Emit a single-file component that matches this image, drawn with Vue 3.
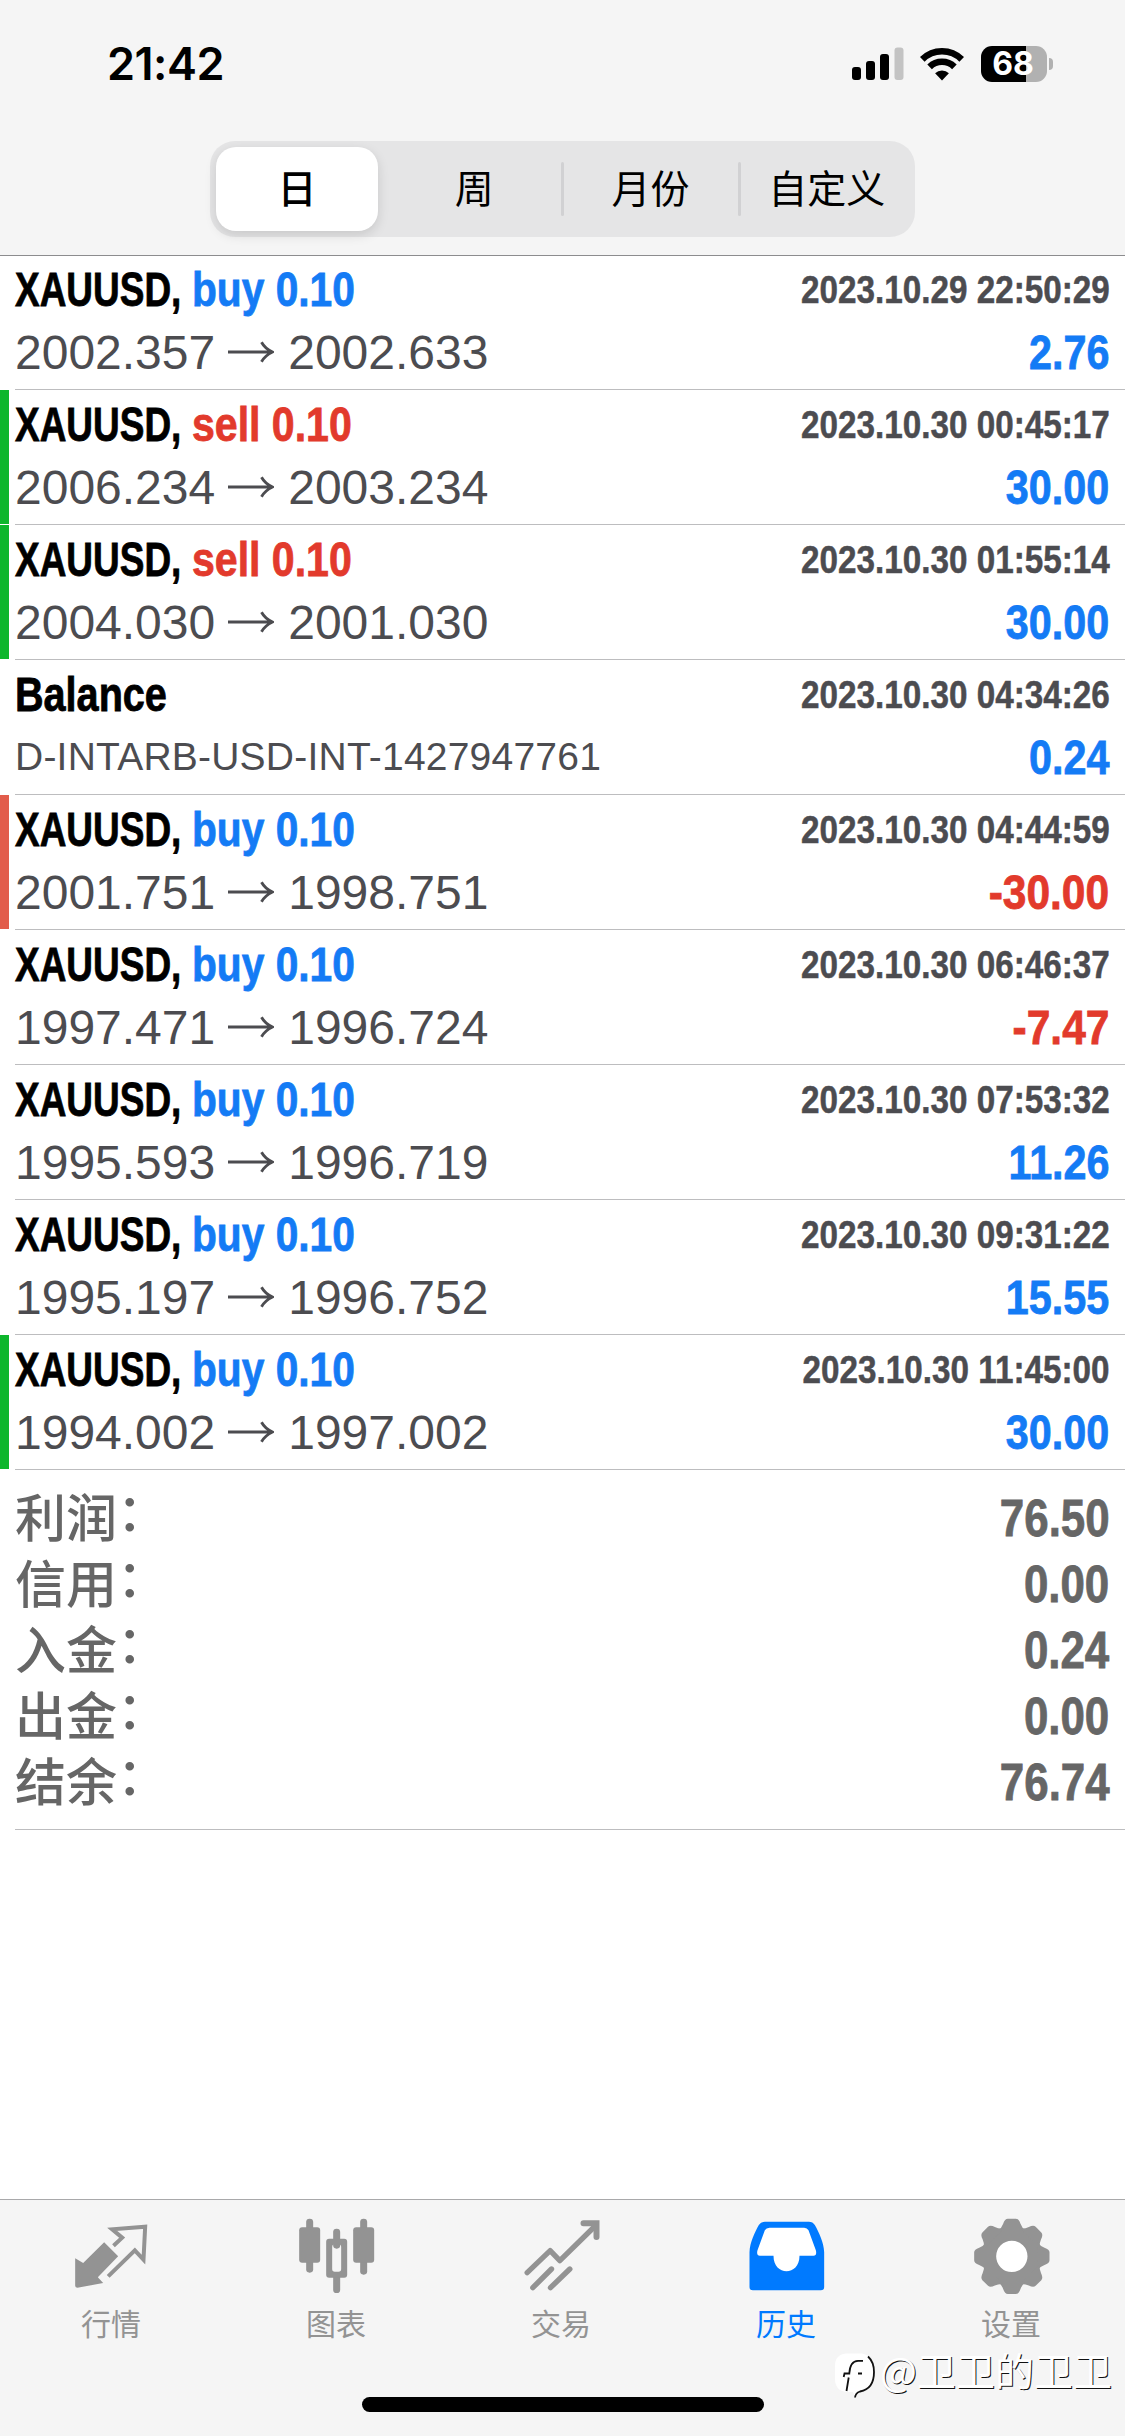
<script setup>
const periods = ['日', '周', '月份', '自定义']

const deals = [
  { symbol: 'XAUUSD,', side: 'buy', lots: '0.10', open: '2002.357', close: '2002.633', time: '2023.10.29 22:50:29', profit: '2.76' },
  { symbol: 'XAUUSD,', side: 'sell', lots: '0.10', open: '2006.234', close: '2003.234', time: '2023.10.30 00:45:17', profit: '30.00', mark: 'tp' },
  { symbol: 'XAUUSD,', side: 'sell', lots: '0.10', open: '2004.030', close: '2001.030', time: '2023.10.30 01:55:14', profit: '30.00', mark: 'tp' },
  { symbol: 'Balance', comment: 'D-INTARB-USD-INT-1427947761', time: '2023.10.30 04:34:26', profit: '0.24' },
  { symbol: 'XAUUSD,', side: 'buy', lots: '0.10', open: '2001.751', close: '1998.751', time: '2023.10.30 04:44:59', profit: '-30.00', mark: 'sl' },
  { symbol: 'XAUUSD,', side: 'buy', lots: '0.10', open: '1997.471', close: '1996.724', time: '2023.10.30 06:46:37', profit: '-7.47' },
  { symbol: 'XAUUSD,', side: 'buy', lots: '0.10', open: '1995.593', close: '1996.719', time: '2023.10.30 07:53:32', profit: '11.26' },
  { symbol: 'XAUUSD,', side: 'buy', lots: '0.10', open: '1995.197', close: '1996.752', time: '2023.10.30 09:31:22', profit: '15.55' },
  { symbol: 'XAUUSD,', side: 'buy', lots: '0.10', open: '1994.002', close: '1997.002', time: '2023.10.30 11:45:00', profit: '30.00', mark: 'tp' },
]

const totals = [
  ['利润', '76.50'],
  ['信用', '0.00'],
  ['入金', '0.24'],
  ['出金', '0.00'],
  ['结余', '76.74'],
]

const toothAngles = [0, 45, 90, 135, 180, 225, 270, 315]
</script>

<template>
  <div class="screen">
    <header class="header">
      <div class="status">
        <span class="clock">21:42</span>
        <div class="indicators">
          <svg class="signal" width="52" height="34" viewBox="0 0 52 34">
            <rect x="0" y="20" width="9" height="13" rx="3" />
            <rect x="14" y="14" width="9" height="19" rx="3" />
            <rect x="28" y="7" width="9" height="26" rx="3" />
            <rect x="42.5" y="0.5" width="9" height="32.5" rx="3" fill="#c3c3c3" />
          </svg>
          <svg class="wifi" width="44" height="34" viewBox="0 0 44 34">
            <g fill="none" stroke="#000" stroke-width="6.6">
              <path d="M2.3 12.3a28 28 0 0 1 39.4 0" />
              <path d="M9.6 19.8a17.8 17.8 0 0 1 24.8 0" />
            </g>
            <path d="M22 33.5l-6.9-7.2a9.8 9.8 0 0 1 13.8 0z" />
          </svg>
          <div class="battery">
            <div class="cell"><span>68</span></div>
            <i class="nub"></i>
          </div>
        </div>
      </div>
      <nav class="segmented">
        <button v-for="(p, i) in periods" :key="p" :class="{ active: i === 0, ruled: i > 1 }">{{ p }}</button>
      </nav>
    </header>

    <main class="list">
      <article v-for="d in deals" :key="d.time" class="deal" :class="d.mark">
        <div class="line top">
          <div class="title">
            <span class="name" :class="{ plain: !d.side }"><b>{{ d.symbol }}</b></span>
            <b v-if="d.side" class="side" :class="d.side">{{ d.side }} {{ d.lots }}</b>
          </div>
          <b class="time">{{ d.time }}</b>
        </div>
        <div class="line bottom">
          <div v-if="d.open" class="prices">
            <span>{{ d.open }}</span>
            <svg width="46" height="24" viewBox="0 0 46 24" fill="none" stroke="#4c4c50" stroke-width="2.8">
              <path d="M0 12H44M33.5 2.2Q37 8.5 44.5 12Q37 15.5 33.5 21.8" />
            </svg>
            <span>{{ d.close }}</span>
          </div>
          <span v-else class="comment">{{ d.comment }}</span>
          <b class="profit" :class="{ loss: d.profit[0] === '-' }">{{ d.profit }}</b>
        </div>
      </article>
      <section class="totals">
        <div v-for="t in totals" :key="t[0]" class="total">
          <span class="label">{{ t[0] }}<span class="colon">：</span></span>
          <b>{{ t[1] }}</b>
        </div>
      </section>
    </main>

    <footer class="tabs">
      <div class="tab">
        <svg viewBox="218.5 112 240 240">
          <path d="M225 236L249 250L312 188L354 230L293 293L309 310L232 324Q225 324 225 318Z" fill="currentColor" />
          <path d="M340 198L366 174L336 149L435 141L430 240L404 212L324 290" fill="none" stroke="currentColor" stroke-width="12" />
        </svg>
        <span>行情</span>
      </div>
      <div class="tab">
        <svg viewBox="893.5 112 240 240" fill="currentColor">
          <rect x="918" y="117" width="21" height="162" rx="10" />
          <rect x="897" y="143" width="63" height="106" rx="9" />
          <rect x="999" y="147" width="21" height="60" rx="10" />
          <rect x="999" y="280" width="21" height="60" rx="10" />
          <path fill-rule="evenodd" d="M987 177h45q9 0 9 9v99q0 9-9 9h-45q-9 0-9-9v-99q0-9 9-9zM1004 194q-8 0-8 8v66q0 8 8 8h11q8 0 8-8v-66q0-8-8-8z" />
          <rect x="1080" y="117" width="21" height="168" rx="10" />
          <rect x="1059" y="143" width="63" height="106" rx="9" />
        </svg>
        <span>图表</span>
      </div>
      <div class="tab">
        <svg viewBox="367.5 112 240 240" fill="none" stroke="currentColor" stroke-width="16" stroke-linecap="round">
          <path d="M380 279L449 213L478 243L587 136" stroke-linejoin="round" />
          <path d="M549 131H588V172" stroke-width="18" />
          <path d="M397 324L453 268M450 324L508 268" />
        </svg>
        <span>交易</span>
      </div>
      <div class="tab current">
        <svg viewBox="83.5 112 240 240">
          <path fill="#fff" d="M130 135h140l30 100-60 50h-80l-60-50z" />
          <path fill="currentColor" fill-rule="evenodd" d="M98 332Q88 332 88 322V218C89 188 104 158 116 136Q122 126 134 126H266Q278 126 284 136C296 158 311 188 312 218V322Q312 332 302 332ZM148 144Q138 144 134 152L112 212Q108 228 119 228H160C160 290 238 290 238 228H280Q291 228 287 212L265 152Q261 144 252 144Z" />
        </svg>
        <span>历史</span>
      </div>
      <div class="tab">
        <svg viewBox="-116.5 -118 240 240">
          <circle r="68" fill="#fff" stroke="currentColor" stroke-width="42" />
          <path v-for="a in toothAngles" :key="a" :transform="`rotate(${a})`" fill="currentColor" d="M-42-76Q-30-86-26-98Q-21-113-12-113H12Q21-113 26-98Q30-86 42-76Z" />
        </svg>
        <span>设置</span>
      </div>
      <i class="home"></i>
    </footer>

    <div class="watermark">
      <svg width="42" height="46" viewBox="0 0 42 46">
        <path d="M12 .5H27Q39 3 39 19Q39 36 24 38L20 44L18 39H12Q0 38 0 26V13Q0 1 12 .5Z" fill="#fff" />
        <path d="M33 3.5Q39 9 39 19Q39 36 25 38.5Q20.5 40 20 44.5" fill="none" stroke="#111" stroke-width="1.8" />
        <path d="M11.5 38L13.7 24.5M8.7 24L9.5 20.5H14.3Q15 8 23 7.8H28M23 20.5H27" fill="none" stroke="#111" stroke-width="1.8" />
      </svg>
      <span>@卫卫的卫卫</span>
    </div>
  </div>
</template>

<style>
body {
  background: #fff;
}
</style>

<style scoped>
.screen {
  position: relative;
  display: flex;
  flex-direction: column;
  width: 1125px;
  height: 2436px;
  overflow: hidden;
  background: #fff;
  font-family: 'Liberation Sans', 'Noto Sans CJK SC', sans-serif;
}
.header {
  position: relative;
  z-index: 1;
  flex: none;
  box-sizing: border-box;
  height: 256px;
  border-bottom: 1px solid #8c8c8e;
  background: #f5f5f5;
}
.status {
  display: flex;
  justify-content: space-between;
  align-items: center;
  box-sizing: border-box;
  height: 141px;
  padding: 0 72px 13px 107px;
}
.clock {
  font: 600 45px/60px Inter, sans-serif;
  letter-spacing: -0.5px;
}
.indicators {
  display: flex;
  align-items: center;
}
.wifi {
  margin-left: 16px;
}
.battery {
  display: flex;
  align-items: center;
  margin-left: 17px;
}
.cell {
  width: 66px;
  height: 36px;
  border-radius: 11px;
  background: linear-gradient(90deg, #000 45px, #b1b1b1 45px);
  color: #fff;
  text-align: center;
  font: 700 32px/36px Inter, sans-serif;
}
.cell span {
  margin-right: 2px;
}
.nub {
  width: 4px;
  height: 12px;
  margin-left: 2px;
  border-radius: 0 5px 5px 0;
  background: #b1b1b1;
}
.segmented {
  display: flex;
  box-sizing: border-box;
  width: 705px;
  height: 96px;
  margin-left: 210px;
  border-radius: 25px;
  background: #e5e5e6;
}
.segmented button {
  position: relative;
  flex: 1;
  padding: 2px 0 0;
  border: 0;
  background: none;
  color: #000;
  text-align: center;
  font: 400 39px/94px 'Liberation Sans', 'Noto Sans CJK SC', sans-serif;
}
.segmented .active {
  flex: none;
  width: 162px;
  margin: 6px 8px 6px 6px;
  border-radius: 20px;
  background: #fff;
  box-shadow: 0 4px 12px rgba(0, 0, 0, 0.13);
  font-weight: 500;
  line-height: 82px;
}
.ruled::before {
  content: '';
  position: absolute;
  left: -1px;
  top: 21px;
  width: 3px;
  height: 54px;
  border-radius: 2px;
  background: #d1d1d3;
}
.list {
  margin-top: -1px;
}
.deal {
  position: relative;
  height: 135px;
  padding: 0 15.5px 0 15px;
}
.deal::after,
.totals::after {
  content: '';
  position: absolute;
  left: 15px;
  right: 0;
  bottom: 0;
  height: 1px;
  background: #bdbdbf;
}
.tp::before,
.sl::before {
  content: '';
  position: absolute;
  left: 0;
  top: 0;
  width: 9px;
  height: 134px;
  background: #0db62c;
}
.sl::before {
  background: #e25c4b;
}
.line {
  display: flex;
  justify-content: space-between;
  align-items: center;
  white-space: nowrap;
  font-size: 48px;
}
.top {
  height: 68px;
}
.bottom {
  height: 58px;
}
.title {
  display: flex;
  -webkit-text-stroke: 0.8px;
}
.name {
  width: 176.5px;
}
.name b {
  display: inline-block;
  transform: scaleX(0.77);
  transform-origin: left;
}
.name.plain b {
  transform: scaleX(0.825);
}
.side {
  transform: scaleX(0.848);
  transform-origin: left;
}
.side.sell {
  transform: scaleX(0.855);
}
.buy,
.profit {
  color: #147bf5;
}
.sell,
.profit.loss {
  color: #e23a2c;
}
.time {
  color: #4c4c50;
  font-size: 39.5px;
  transform: scaleX(0.842);
  transform-origin: right;
  -webkit-text-stroke: 0.5px;
}
.profit,
.total b {
  transform: scaleX(0.86);
  transform-origin: right;
  -webkit-text-stroke: 0.8px;
}
.profit.loss {
  transform: scaleX(0.885);
}
.prices {
  display: flex;
  align-items: center;
  color: #4c4c50;
}
.prices svg {
  margin: 0 14px 0 13px;
}
.comment {
  color: #4c4c50;
  font-size: 39px;
  letter-spacing: 0.22px;
}
.totals {
  position: relative;
  box-sizing: border-box;
  height: 360px;
  padding: 15px 15.5px 15px 15px;
  color: #666;
}
.total {
  display: flex;
  justify-content: space-between;
  align-items: center;
  height: 66px;
  font-size: 51px;
}
.label {
  display: flex;
  padding-top: 3px;
  font: 500 51px/63px 'Liberation Sans', 'Noto Sans CJK SC', sans-serif;
}
.colon {
  margin: -6px 0 6px 0;
}
.tabs {
  display: flex;
  flex: none;
  position: relative;
  box-sizing: border-box;
  height: 237px;
  margin-top: auto;
  border-top: 1px solid #a9a9ab;
  background: #f5f5f5;
}
.tab {
  display: flex;
  flex: 1;
  flex-direction: column;
  align-items: center;
  padding-top: 17px;
  color: #939393;
}
.tab svg {
  width: 80px;
  height: 80px;
}
.tab span {
  padding-right: 3px;
  font: 400 30px/50px 'Noto Sans CJK SC', sans-serif;
}
.tab.current {
  color: #007aff;
}
.home {
  position: absolute;
  left: 362px;
  bottom: 24px;
  width: 402px;
  height: 15px;
  border-radius: 8px;
  background: #000;
}
.watermark {
  position: absolute;
  left: 835px;
  top: 2353px;
  display: flex;
  align-items: flex-start;
  color: #fff;
  white-space: nowrap;
}
.watermark span {
  margin: -5px 0 0 3px;
  font: 400 39px/42px 'Noto Sans CJK SC', sans-serif;
  text-shadow: 1px 1px 0 #111;
}
</style>
